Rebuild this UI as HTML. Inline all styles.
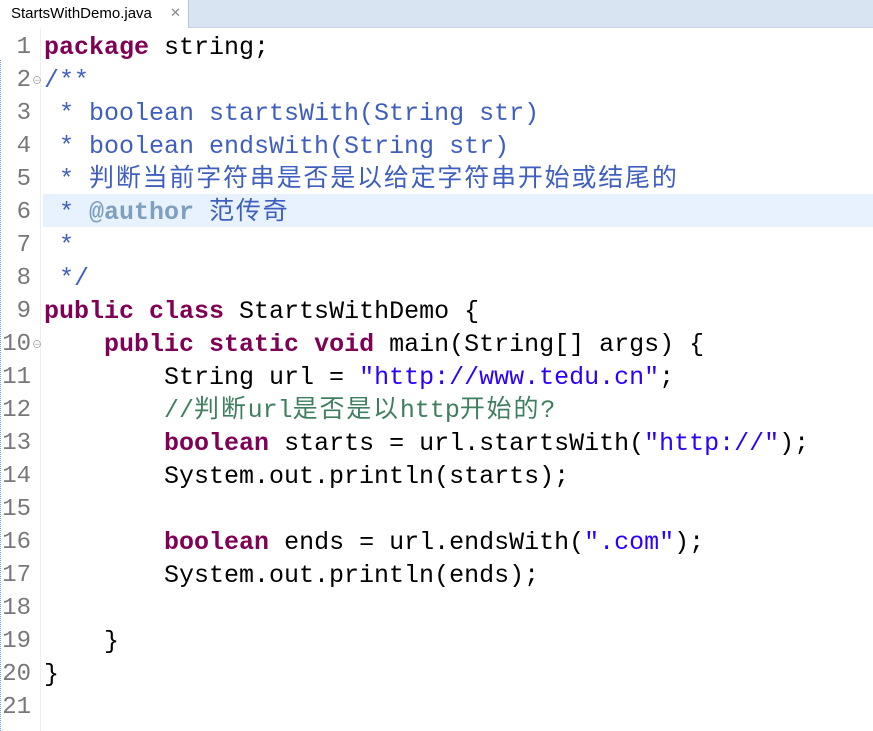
<!DOCTYPE html>
<html><head><meta charset="utf-8"><style>
body{margin:0;width:873px;height:731px;background:#fff;overflow:hidden;position:relative;font-family:"Liberation Mono","Noto Sans CJK SC",monospace;}
.tabbar{position:absolute;left:0;top:0;width:873px;height:27px;background:#d9e4f2;border-bottom:1px solid #c5d2e3;}
.tab{position:absolute;left:0;top:0;width:188px;height:28px;background:#fff;border-right:1px solid #b9c7da;font:15px "Liberation Sans",sans-serif;color:#000;}
.tab span{position:absolute;left:11px;top:5px;}
.tab i{position:absolute;left:170px;top:5px;font-style:normal;color:#888;font-size:13px;}
.gut{position:absolute;left:40px;top:28px;width:1px;height:703px;background:#eee;}
.dot{position:absolute;left:0;top:60px;width:1px;height:671px;border-left:1px dotted #6aa0e0;}
.hl{position:absolute;left:43px;top:194px;width:830px;height:33px;background:#e8f2fe;}
.ln{position:absolute;left:0;width:31px;text-align:right;font-size:24px;color:#787878;height:33px;line-height:37px;}
.code{position:absolute;left:44px;height:33px;line-height:37px;font-size:25px;white-space:pre;color:#000;}
.k{color:#7f0055;font-weight:bold}.c{color:#3f5fbf}.a{color:#7f9fbf;font-weight:bold}.s{color:#2a00ff}.g{color:#3f7f5f}
.z{letter-spacing:1.8px}
.f{position:absolute;left:32px;font-size:10px;color:#999;}
</style></head><body>
<div class="tabbar"></div>
<div class="tab"><span>StartsWithDemo.java</span><i>✕</i></div>
<div class="dot"></div><div class="gut"></div>
<div class="hl"></div>
<div class="ln" style="top:29px">1</div><div class="ln" style="top:62px">2</div><div class="ln" style="top:95px">3</div><div class="ln" style="top:128px">4</div><div class="ln" style="top:161px">5</div><div class="ln" style="top:194px">6</div><div class="ln" style="top:227px">7</div><div class="ln" style="top:260px">8</div><div class="ln" style="top:293px">9</div><div class="ln" style="top:326px">10</div><div class="ln" style="top:359px">11</div><div class="ln" style="top:392px">12</div><div class="ln" style="top:425px">13</div><div class="ln" style="top:458px">14</div><div class="ln" style="top:491px">15</div><div class="ln" style="top:524px">16</div><div class="ln" style="top:557px">17</div><div class="ln" style="top:590px">18</div><div class="ln" style="top:623px">19</div><div class="ln" style="top:656px">20</div><div class="ln" style="top:689px">21</div>
<div class="f" style="top:72px">⊖</div><div class="f" style="top:336px">⊖</div>
<div class="code" style="top:29px"><span class="k">package</span> string;</div>
<div class="code c" style="top:62px">/**</div>
<div class="code c" style="top:95px"> * boolean startsWith(String str)</div>
<div class="code c" style="top:128px"> * boolean endsWith(String str)</div>
<div class="code c" style="top:161px"> * <span class="z">判断当前字符串是否是以给定字符串开始或结尾的</span></div>
<div class="code c" style="top:194px"> * <span class="a">@author</span> <span class="z">范传奇</span></div>
<div class="code c" style="top:227px"> *</div>
<div class="code c" style="top:260px"> */</div>
<div class="code" style="top:293px"><span class="k">public</span> <span class="k">class</span> StartsWithDemo {</div>
<div class="code" style="top:326px">    <span class="k">public</span> <span class="k">static</span> <span class="k">void</span> main(String[] args) {</div>
<div class="code" style="top:359px">        String url = <span class="s">"http://www.tedu.cn"</span>;</div>
<div class="code g" style="top:392px">        //<span class="z">判断</span>url<span class="z">是否是以</span>http<span class="z">开始的</span>?</div>
<div class="code" style="top:425px">        <span class="k">boolean</span> starts = url.startsWith(<span class="s">"http://"</span>);</div>
<div class="code" style="top:458px">        System.out.println(starts);</div>
<div class="code" style="top:524px">        <span class="k">boolean</span> ends = url.endsWith(<span class="s">".com"</span>);</div>
<div class="code" style="top:557px">        System.out.println(ends);</div>
<div class="code" style="top:623px">    }</div>
<div class="code" style="top:656px">}</div>
</body></html>
